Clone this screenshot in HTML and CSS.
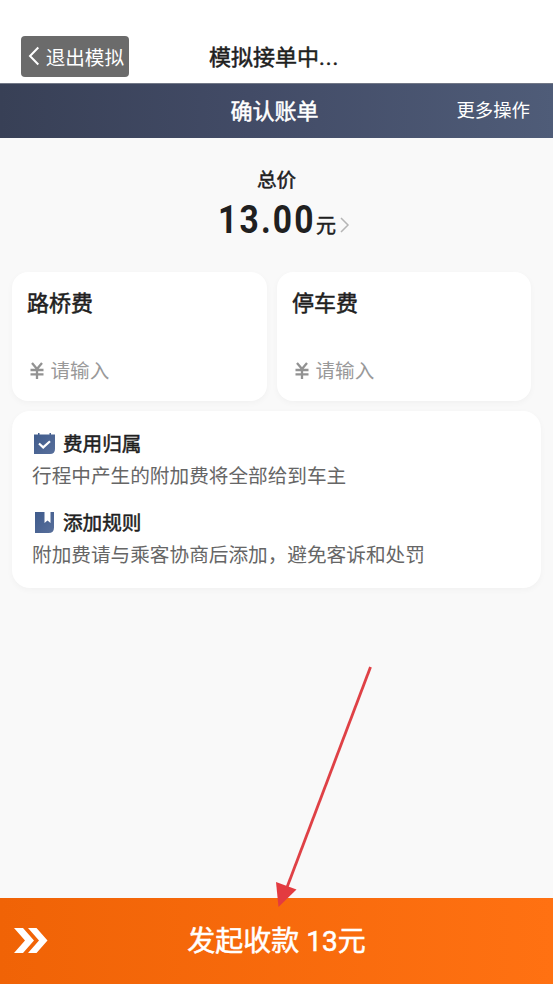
FILE: index.html
```html
<!DOCTYPE html>
<html lang="zh-CN">
<head>
<meta charset="utf-8">
<title>确认账单</title>
<link rel="stylesheet" href="styles.css">
</head>
<body>
<div class="screen">
  <header class="topbar">
    <button class="exit">
      <svg class="back" width="12" height="20" viewBox="0 0 12 20"><path d="M10.3 1.5 2 10l8.300 8.500" fill="none" stroke="#fff" stroke-width="2"/></svg>
      <span>退出模拟</span>
    </button>
    <h1 class="status medium">模拟接单中<span class="dots">...</span></h1>
  </header>
  <nav class="navbar">
    <h2 class="nav-title medium">确认账单</h2>
    <a class="more">更多操作</a>
  </nav>
  <main class="content">
    <section class="total">
      <div class="total-label medium">总价</div>
      <div class="total-row">
        <span class="amount">13.00</span><span class="unit medium">元</span>
        <svg class="chevron" width="10" height="16" viewBox="0 0 10 16"><path d="m1 1 7 7-7 7" fill="none" stroke="#b5b5b5" stroke-width="1.5"/></svg>
      </div>
    </section>
    <section class="fees">
      <div class="fee">
        <h3 class="fee-title medium">路桥费</h3>
        <div class="entry"><svg class="yen" width="14" height="17" viewBox="0 0 14 17"><path d="m2 1 5 6 5-6M.5 8h13M.5 12.300h13M7 7v10" fill="none" stroke="#929292" stroke-width="2.300"/></svg><span>请输入</span></div>
      </div>
      <div class="fee">
        <h3 class="fee-title medium">停车费</h3>
        <div class="entry"><svg class="yen" width="14" height="17" viewBox="0 0 14 17"><path d="m2 1 5 6 5-6M.5 8h13M.5 12.300h13M7 7v10" fill="none" stroke="#929292" stroke-width="2.300"/></svg><span>请输入</span></div>
      </div>
    </section>
    <section class="notes">
      <div class="note">
        <h4 class="note-title"><svg class="note-icon" width="21" height="21" viewBox="0 0 21 21"><defs><linearGradient id="blue" x1="0" y1="0" x2="1" y2="1"><stop offset="0" stop-color="#3f5b8c"/><stop offset="1" stop-color="#586f9b"/></linearGradient></defs><path d="M0 1.500h4V0h1.500v1.500h10V0H17v1.500h4V16q0 5-5 5H0z" fill="url(#blue)"/><path d="m5 10.500 4.200 3.900 6.800-6.200" fill="none" stroke="#fff" stroke-width="2.200"/></svg><span class="medium">费用归属</span></h4>
        <p class="note-text">行程中产生的附加费将全部给到车主</p>
      </div>
      <div class="note">
        <h4 class="note-title"><svg class="note-icon" width="21" height="21" viewBox="0 0 21 21"><path d="M1 0h9.500v11l3-2.500 3 2.500V0H20v15.500q0 5.500-5.500 5.500H1z" fill="url(#blue)"/></svg><span class="medium">添加规则</span></h4>
        <p class="note-text">附加费请与乘客协商后添加，避免客诉和处罚</p>
      </div>
    </section>
  </main>
  <footer class="pay">
    <svg class="slide" width="34" height="25" viewBox="0 0 34 25"><path d="M0 0h9l11 12.500L9 25H0l11-12.500zM14 0h8.500l11 12.500-11 12.500H14l11-12.500z" fill="#fff"/></svg>
    <span class="pay-text medium">发起收款 13元</span>
  </footer>
  <svg class="pointer" width="100" height="244" viewBox="0 0 100 244"><path d="M98.500 1 14 224" stroke="#df4146" stroke-width="2.800"/><path d="M4 216 24.500 223.500 6.500 241z" fill="#e33b40"/></svg>
</div>
</body>
</html>
```

FILE: styles.css
```css
* { box-sizing: border-box; }
body, h1, h2, h3, h4, p { margin: 0; font-weight: 400; }
body { font-family: Roboto, "Noto Sans CJK SC", sans-serif; color: #202020; }
.screen {
  position: relative;
  height: 984px;
  display: flex;
  flex-direction: column;
  background: #f9f9f9;
  overflow: hidden;
}
.medium { -webkit-text-stroke: 0.5px currentColor; }
.topbar {
  height: 83px;
  padding: 36px 21px 0;
  display: grid;
  grid-template-columns: 108px 1fr 108px;
  background: #fff;
}
.exit {
  height: 41px;
  padding: 0 5px 0 7px;
  border: 0;
  border-radius: 4px;
  background: #6b6b6b;
  color: #fff;
  font: inherit;
  font-size: 19.6px;
  display: flex;
  align-items: center;
  justify-content: space-between;
  white-space: nowrap;
}
.back { margin-top: -1px; }
.status { font-size: 22px; line-height: 43px; padding-left: 80px; white-space: nowrap; }
.dots { letter-spacing: .9px; }
.navbar {
  height: 55px;
  padding: 0 23px 0 19px;
  display: grid;
  grid-template-columns: 1fr auto 1fr;
  align-items: center;
  background: linear-gradient(90deg, #384056, #424b66 45%, #4f5c78);
  border-top: 1px solid #727887;
  color: #fff;
}
.nav-title { grid-column: 2; font-size: 22px; line-height: 54px; padding-top: 1px; height: 54px; }
.more { justify-self: end; font-size: 18.4px; line-height: 26px; }
.content { flex: 1; padding: 29px 12px 0; }
.total { height: 105px; display: flex; flex-direction: column; align-items: center; }
.total-label { font-size: 19.6px; line-height: 28px; }
.total-row { display: flex; align-items: baseline; height: 50px; margin-left: -1px; }
.amount { font-size: 39px; font-weight: 700; line-height: 50px; letter-spacing: 2.6px; transform: scaleX(.86); transform-origin: right; }
.unit { font-size: 20px; }
.chevron { margin-left: 4px; }
.fees { display: grid; grid-template-columns: 255px 254px; gap: 10px; }
.fee {
  height: 129px;
  padding: 15px 15px;
  border-radius: 16px;
  background: #fff;
  box-shadow: 0 2px 6px rgba(0, 0, 0, .035);
}
.fee-title { font-size: 22px; line-height: 34px; }
.entry { display: flex; align-items: center; gap: 7px; padding-left: 2.5px; margin-top: 36px; font-size: 19.6px; line-height: 30px; color: #999; }
.yen { margin-top: -4px; }
.notes {
  margin-top: 10px;
  height: 177px;
  padding: 19px 20px;
  border-radius: 18px;
  background: #fff;
  box-shadow: 0 2px 6px rgba(0, 0, 0, .035);
}
.note { height: 79px; }
.note-title { display: flex; align-items: center; gap: 8px; padding-left: 2px; font-size: 19.6px; line-height: 29px; }
.note-icon { margin-top: -2px; }
.note-text { font-size: 19.65px; line-height: 35px; color: #666; white-space: nowrap; }
.pay {
  height: 86px;
  padding: 0 14px;
  display: grid;
  grid-template-columns: 34px 1fr 34px;
  align-items: center;
  background: linear-gradient(90deg, #f06306, #ff7112);
  color: #fff;
}
.slide { margin-top: -1px; }
.pay-text { text-align: center; font-size: 28px; line-height: 40px; padding-top: 1px; }
.pointer { position: absolute; left: 272px; top: 666px; }
```
